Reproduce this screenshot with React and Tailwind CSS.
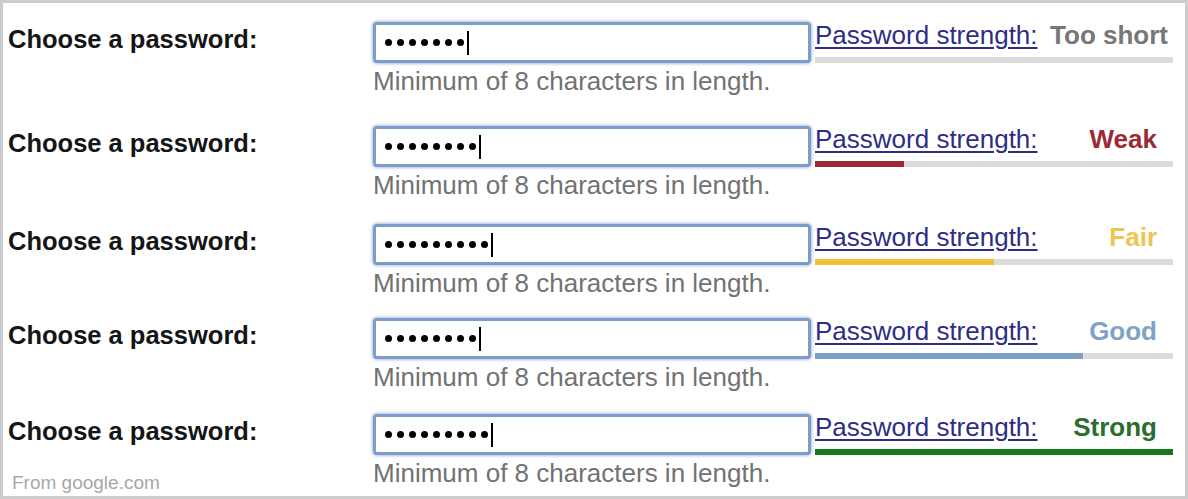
import React from "react";

const rows = [
  { dots: 7, status: "Too short", statusColor: "text-[#777777]", fill: 0, fillColor: "bg-transparent", pr: "pr-[5px]", h: "h-[104px]" },
  { dots: 8, status: "Weak", statusColor: "text-[#9b2a36]", fill: 89, fillColor: "bg-[#9b2a36]", pr: "pr-[16px]", h: "h-[98px]" },
  { dots: 9, status: "Fair", statusColor: "text-[#eec452]", fill: 179, fillColor: "bg-[#f0c23c]", pr: "pr-[16px]", h: "h-[94px]" },
  { dots: 8, status: "Good", statusColor: "text-[#80a2c6]", fill: 268, fillColor: "bg-[#7c9fc4]", pr: "pr-[16px]", h: "h-[96px]" },
  { dots: 9, status: "Strong", statusColor: "text-[#2b6e2f]", fill: 358, fillColor: "bg-[#18761c]", pr: "pr-[16px]", h: "h-[75px]" },
];

const PasswordRow = ({ row }) => {
  return (
    <div className={`flex items-start ${row.h}`}>
      <div className="w-[365px] shrink-0 pt-[5px] text-[25.5px] leading-[25px] font-bold text-[#151515] whitespace-nowrap">
        Choose a password:
      </div>
      <div className="w-[438px] shrink-0">
        <div className="h-[41px] rounded-[4px] border-[3px] border-[#7d9dc8] bg-white shadow-[0_0_3px_1px_rgba(120,150,200,0.6)] flex items-center pl-[9px] gap-[5px]">
          {Array.from({ length: row.dots }).map((_, i) => (
            <span key={i} className="w-[7px] h-[7px] rounded-full bg-black" />
          ))}
          <span className="w-[2px] h-[24px] bg-black -ml-[2px]" />
        </div>
        <div className="mt-[5px] text-[26px] leading-[26px] text-[#727272] whitespace-nowrap">
          Minimum of 8 characters in length.
        </div>
      </div>
      <div className="ml-[4px] w-[358px] shrink-0">
        <div className={`flex justify-between items-start h-[26px] text-[26px] leading-[26px] ${row.pr}`}>
          <a href="#" className="text-[#2d2d86] underline underline-offset-[3px] whitespace-nowrap">
            Password strength:
          </a>
          <span className={`font-bold whitespace-nowrap ${row.statusColor}`}>{row.status}</span>
        </div>
        <div className="mt-[9px] h-[6px] bg-[#dcdcdc]">
          <div className={`h-full ${row.fillColor}`} style={{ width: row.fill }} />
        </div>
      </div>
    </div>
  );
};

const App = () => {
  return (
    <div className="w-[1188px] h-[499px] bg-white border-[3px] border-[#cccccc] font-['Liberation_Sans',Arial,sans-serif] flex flex-col overflow-hidden">
      <div className="pt-[19px] pl-[5px] flex-1">
        {rows.map((row, i) => (
          <PasswordRow key={i} row={row} />
        ))}
      </div>
      <div className="pl-[9px] pb-[3px] text-[19px] leading-[20px] text-[#a8a8a8] -mt-[20px]">
        From google.com
      </div>
    </div>
  );
};

export default App;
